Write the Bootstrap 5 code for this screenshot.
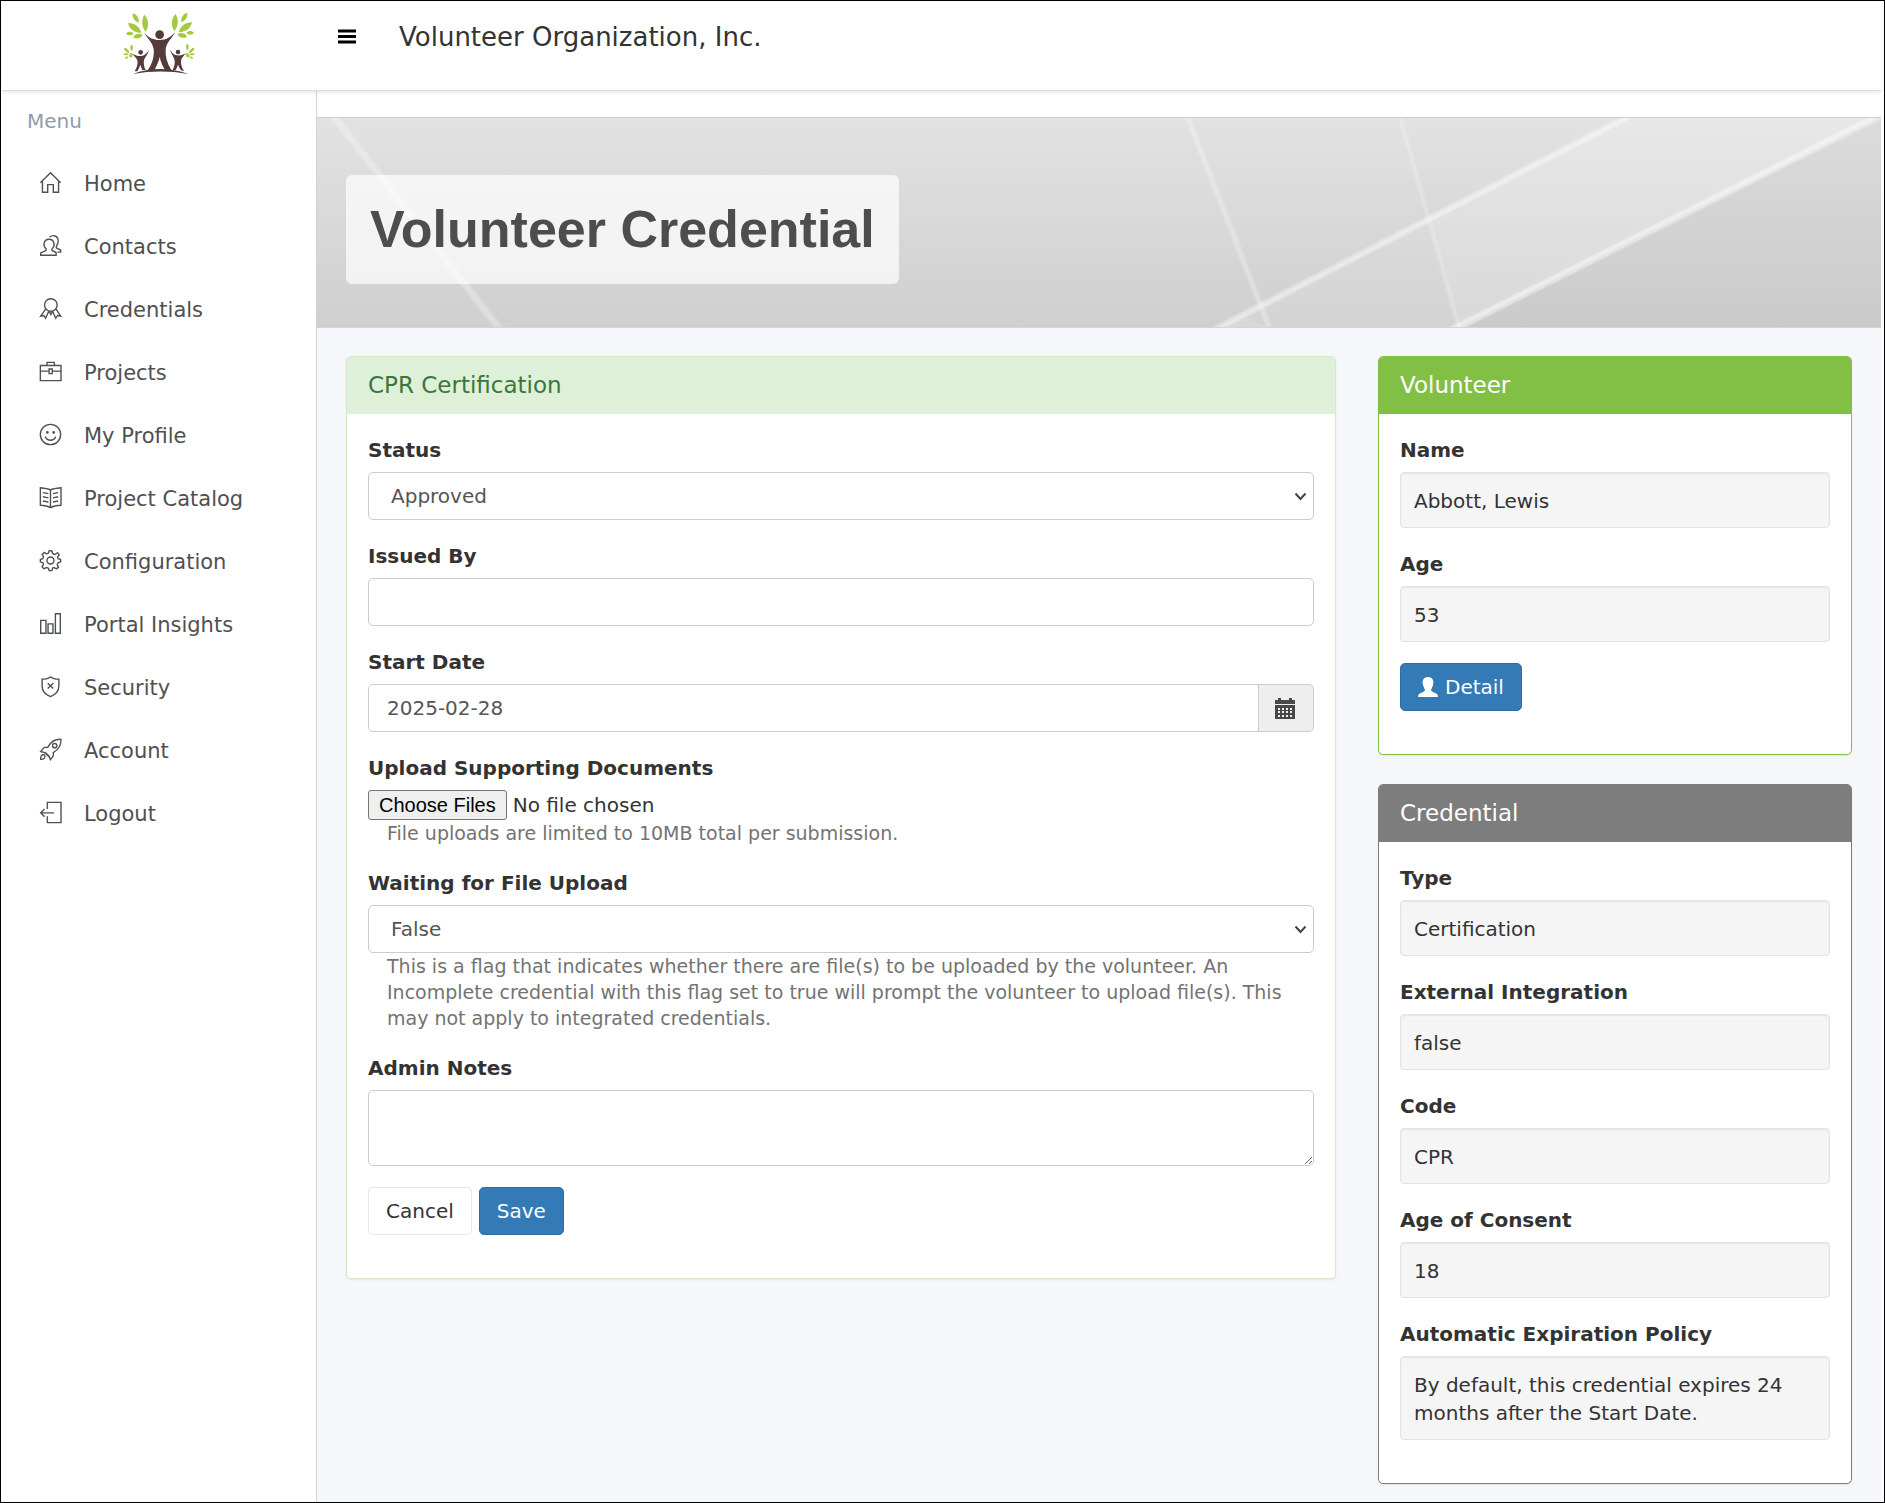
<!DOCTYPE html>
<html lang="en">
<head>
<meta charset="utf-8">
<meta name="viewport" content="width=device-width, initial-scale=1">
<title>Volunteer Credential</title>
<link href="https://cdn.jsdelivr.net/npm/bootstrap@5.3.0/dist/css/bootstrap.min.css" rel="stylesheet">
<style>
  body { font-family: "DejaVu Sans", Verdana, sans-serif; font-size: 20px; line-height: 28px; color: #333; background: #fff; }
  .app-frame { min-height: 100vh; border: 1px solid #000; padding: 0 3px 0 1px; background: #fff; }
  .app-header { min-height: 90px; border-bottom: 1px solid #dedede; box-shadow: 0 2px 3px rgba(0,0,0,.08); z-index: 2; }
  .brand-area { flex: 0 0 314px; padding: 11px 2px 0 0; }
  .brand-area svg { width: 74px; height: 64px; }
  .menu-toggle { width: 61px; padding: 28px 0 0 22px; border: 0; background: none; line-height: 0; text-align: left; }
  .org-name { font-size: 26px; line-height: 34px; padding: 19px 20px 0 22px; }
  .side-menu { flex: 0 0 315px; border-right: 1px solid #d3d3d5; background: #fff; }
  .menu-title { line-height: 60px; padding-left: 25px; color: #8e9bab; }
  .side-menu .nav-link { display: flex; align-items: center; gap: 23px; min-height: 63px; padding: 2px 20px 0 38px; font-size: 21px; color: #505050; }
  .side-menu svg { width: 21px; height: 21px; margin-bottom: 3px; fill: none; stroke: #4d5256; stroke-width: 4; overflow: visible; }
  .main-area { background: #f5f7fb; }
  .top-strip { height: 27px; background: #fff; border-bottom: 1px solid #cdcdcd; }
  .hero { height: 210px; border-bottom: 1px solid #ced6de; padding: 57px 29px 0; background: linear-gradient(#e2e2e2, #cfcfcf); overflow: hidden; }
  .hero-art { inset: 0; }
  .hero h1 { position: relative; display: inline-block; margin: 0; padding: 25px 24px; border-radius: 6px; background: rgba(255,255,255,.7); color: #4d4d4d; font: bold 52px/59px "Liberation Sans", Arial, sans-serif; }
  .page-body { padding: 28px 29px 16px; }
  .page-body > .row { --bs-gutter-x: 42px; }
  .panel { border: 1px solid var(--edge); border-radius: 5px; background: #fff; box-shadow: 0 1px 2px rgba(0,0,0,.08); overflow: hidden; }
  .panel + .panel { margin-top: 29px; }
  .panel > h2 { margin: 0; padding: 14px 21px; font-size: 23px; line-height: 29px; color: #fff; background: var(--edge); }
  .panel-body { padding: 21px 21px 43px; }
  .panel-cert { --edge: #d6e9c6; }
  .panel-cert > h2 { background: #dff0d8; color: #3c763d; }
  .panel-person { --edge: #82c045; }
  .panel-cred { --edge: #7d7d7d; }
  .field + .field, .actions { margin-top: 21px; }
  .field > label, .field > dt { display: block; margin-bottom: 6px; line-height: 31px; font-weight: 700; }
  .panel .form-control { height: 48px; padding: 9px 18px; border: 1px solid #ccc; border-radius: 5px; color: #555; font-size: 20px; line-height: 28px; background-color: #fff; }
  .panel select.form-control { padding: 9px 30px 9px 22px; background: #fff url("data:image/svg+xml,%3Csvg xmlns='http://www.w3.org/2000/svg' width='13' height='9'%3E%3Cpath d='M1.500 1.500L6.500 7L11.500 1.500' fill='none' stroke='%23444' stroke-width='2'/%3E%3C/svg%3E") no-repeat right 6px center; }
  .panel textarea.form-control { height: 76px; }
  .panel .input-group .form-control { border-radius: 5px 0 0 5px; }
  .input-group .date-btn { width: 56px; padding: 0; border: 1px solid #ccc; border-left: 0; border-radius: 0 5px 5px 0; background: #eee; color: #444; }
  .input-group .date-btn svg { display: block; margin: auto; }
  .file-pick { display: block; height: 30px; width: 100%; line-height: 28px; }
  .file-pick::file-selector-button { height: 30px; margin: 0 6px 0 0; padding: 0 10px; border: 1px solid #767676; border-radius: 3px; background: #efefef; color: #000; font-family: "Liberation Sans", Arial, sans-serif; line-height: 26px; }
  .hint { margin: 0; padding: 0 19px 1px; font-size: 19px; line-height: 26px; color: #737373; }
  .value-well { margin: 0; padding: 14px 13px 12px; min-height: 56px; border: 1px solid #e3e3e3; border-radius: 4px; background: #f5f5f5; box-shadow: inset 0 1px 2px rgba(0,0,0,.07); }
  .panel .btn { height: 48px; padding: 9px 17px; border-radius: 5px; font-size: 20px; line-height: 28px; }
  .btn-row { display: flex; gap: 7px; }
  .panel .btn-plain { border-color: #e7e7e7; color: #333; background: #fff; }
  .panel .btn-main { border-color: #2e6da4; color: #fff; background: #337ab7; }
</style>
<script src="https://cdn.jsdelivr.net/npm/bootstrap@5.3.0/dist/js/bootstrap.bundle.min.js"></script>
</head>
<body>
<div class="app-frame d-flex flex-column">
  <header class="app-header d-flex align-items-start bg-white position-relative">
    <div class="brand-area text-center">
      <a href="#" class="d-inline-block" aria-label="Volunteer Organization home">
        <svg viewBox="0 0 222 192">
          <defs>
            <g id="canopy" fill="#a5c940">
              <path d="M21 33C39 32 57 44 61 63C42 62 25 53 21 33Z"/>
              <path d="M70 8C83 22 86 42 74 59C62 45 60 25 70 8Z"/>
              <path d="M35 4C48 8 55 18 53 32C41 28 34 18 35 4Z"/>
              <path d="M36 76C42 64 54 63 65 68C61 79 47 83 36 76Z"/>
              <path d="M15 65C22 57 31 58 38 65C32 71 22 72 15 65Z"/>
            </g>
          </defs>
          <use href="#canopy"/>
          <use href="#canopy" transform="matrix(-1 0 0 1 234 -2)"/>
          <g fill="#a5c940">
            <ellipse cx="17" cy="115" rx="4" ry="10" transform="rotate(-45 17 115)"/><ellipse cx="32" cy="107" rx="4" ry="9"/><ellipse cx="15" cy="127" rx="8" ry="3"/><ellipse cx="30" cy="130" rx="5" ry="7" transform="rotate(30 30 130)"/><ellipse cx="17" cy="137" rx="5" ry="3" transform="rotate(-30 17 137)"/>
            <ellipse cx="212" cy="115" rx="4" ry="10" transform="rotate(45 212 115)"/><ellipse cx="199" cy="105" rx="4" ry="9"/><ellipse cx="213" cy="127" rx="8" ry="3"/><ellipse cx="200" cy="130" rx="5" ry="7" transform="rotate(-30 200 130)"/><ellipse cx="211" cy="137" rx="5" ry="3" transform="rotate(30 211 137)"/>
          </g>
          <g fill="#553b39">
            <circle cx="116" cy="68" r="13"/>
            <path d="M69 63C86 78 96 84 116 84C136 84 146 77 163 61C149 82 137 93 134 111C132 132 138 153 151 174L132 175C125 162 119 149 116 135C113 149 107 162 100 175L80 175C95 154 100 132 98 111C94 92 84 84 69 63Z"/>
            <circle cx="59" cy="121" r="7"/>
            <path d="M34 125C46 132 53 132 60 132C70 131 77 125 84 114C80 129 72 136 69 144C67 154 69 165 74 174H64C61 167 59 162 58 158C56 164 53 171 49 178H41C49 165 51 153 49 144C45 137 40 132 34 125Z"/>
            <circle cx="171" cy="120" r="7"/>
            <path d="M146 111C153 124 160 130 171 130C180 131 186 128 195 124C187 133 181 139 180 146C179 157 183 168 189 177L180 175C176 169 173 164 171 158C169 164 166 170 164 174H155C161 162 163 152 160 142C157 132 150 124 146 111Z"/>
            <path d="M36 186C85 166 148 166 202 186C146 176 92 176 36 186Z"/>
          </g>
        </svg>
      </a>
    </div>
    <button type="button" class="menu-toggle" aria-label="Toggle menu"><svg width="18" height="15"><path d="M0 2H18M0 7.500H18M0 13H18" stroke="#000" stroke-width="3"/></svg></button>
    <div class="org-name">Volunteer Organization, Inc.</div>
  </header>

  <div class="d-flex flex-grow-1">
    <aside class="side-menu">
      <div class="menu-title">Menu</div>
      <nav class="nav flex-column" aria-label="Main">
        <a class="nav-link" href="#"><svg viewBox="0 0 60 60"><path d="M1 31L30 2L59 31M7 27V58H22V36H38V58H53V27"/></svg>Home</a>
        <a class="nav-link" href="#"><svg viewBox="0 0 60 60"><path d="M2 58V51L16 45Q19 43 17 39C7 29 11 12 26 12C41 12 44 29 35 39Q32 43 36 45L46 50V58ZM27 6C37-2 52 2 52 17C52 24 49 29 47 32Q45 36 49 38L59 43V49H50"/></svg>Contacts</a>
        <a class="nav-link" href="#"><svg viewBox="0 0 60 60"><circle cx="31" cy="20" r="18"/><path d="M16 32L2 52L11 50L16 58L25 38M46 32L59 52L50 50L45 58L36 38M26 38L31 47L36 38"/></svg>Credentials</a>
        <a class="nav-link" href="#"><svg viewBox="0 0 60 60"><path d="M1 13H60V56H1ZM1 29H25M36 29H60M20 13V4H41V13M26 23H35V36H26Z"/></svg>Projects</a>
        <a class="nav-link" href="#"><svg viewBox="0 0 60 60"><circle cx="30" cy="30" r="29"/><circle cx="21" cy="24" r="2" fill="#4d5256"/><circle cx="39" cy="24" r="2" fill="#4d5256"/><path d="M15 36C21 50 39 50 45 36"/></svg>My Profile</a>
        <a class="nav-link" href="#"><svg viewBox="0 0 60 60"><path d="M30 8Q22 4 1 2V52Q20 53 30 59Q40 53 60 52V2Q38 4 30 8V59M8 16L24 19M8 28L24 31M8 40L24 43M52 16L37 19M52 28L37 31M52 40L37 43"/></svg>Project Catalog</a>
        <a class="nav-link" href="#"><svg viewBox="0 0 60 60"><circle cx="30" cy="30" r="10"/><path d="M26 2H34L36 10L43 13L50 8L55 14L50 20L52 25L59 27V34L52 36L49 42L53 49L47 54L40 50L36 52L34 59H26L24 52L18 50L11 54L6 48L10 41L8 36L1 34V27L8 25L10 19L6 12L12 7L19 11L24 9Z" stroke-linejoin="round"/></svg>Configuration</a>
        <a class="nav-link" href="#"><svg viewBox="0 0 60 60"><path d="M2 21H17V58H2ZM23 31H37V58H23ZM44 2H58V58H44Z"/></svg>Portal Insights</a>
        <a class="nav-link" href="#"><svg viewBox="0 0 60 60"><path d="M30 2Q22 9 6 9V28C6 45 17 54 30 59C43 54 54 45 54 28V9Q38 9 30 2M22 21L38 36M38 21L22 36"/></svg>Security</a>
        <a class="nav-link" href="#"><svg viewBox="0 0 60 60"><path d="M60 1C42 0 31 7 22 24H12L2 36L14 39L27 52L30 59L38 48V39C54 29 61 19 60 1ZM16 39L27 50M2 58C1 48 5 44 12 45C18 51 13 59 2 58Z"/><circle cx="42" cy="19" r="6"/></svg>Account</a>
        <a class="nav-link" href="#"><svg viewBox="0 0 60 60"><path d="M21 20V1H60V59H21V41M40 31H2M13 20L2 31L13 42"/></svg>Logout</a>
      </nav>
    </aside>

    <main class="main-area flex-grow-1">
      <div class="top-strip"></div>
      <div class="hero position-relative">
        <svg class="hero-art position-absolute w-100 h-100" viewBox="0 0 1564 209" preserveAspectRatio="none" aria-hidden="true">
          <defs><filter id="soft"><feGaussianBlur stdDeviation="1"/></filter></defs>
          <path d="M1308 0H1558L1141 209H903Z" fill="#fff" opacity=".2"/>
          <path d="M1558 0H1564V209H1141Z" fill="#000" opacity=".025"/>
          <path d="M952 209L925 198L1112 102L1142 209Z" fill="#000" opacity=".02"/>
          <g stroke="#fff" fill="none" filter="url(#soft)">
            <path d="M14-5L185 214" stroke-width="7" opacity=".3"/>
            <path d="M869-5L954 214" stroke-width="5" opacity=".3"/>
            <path d="M1082-5L1143 214" stroke-width="4" opacity=".25"/>
            <path d="M1318-5L893 214" stroke-width="6" opacity=".45"/>
            <path d="M1568-5L1131 214" stroke-width="7" opacity=".5"/>
          </g>
        </svg>
        <h1>Volunteer Credential</h1>
      </div>

      <div class="page-body">
        <div class="row">
          <div class="col-8">
            <section class="panel panel-cert">
              <h2>CPR Certification</h2>
              <form class="panel-body" onsubmit="return false">
                <div class="field"><label for="status">Status</label>
                  <select id="status" class="form-control"><option>Approved</option><option>Incomplete</option></select></div>
                <div class="field"><label for="issuer">Issued By</label>
                  <input id="issuer" type="text" class="form-control"></div>
                <div class="field"><label for="start">Start Date</label>
                  <div class="input-group"><input id="start" type="text" class="form-control" value="2025-02-28">
                    <button type="button" class="date-btn" aria-label="Pick a date"><svg width="20" height="21" viewBox="0 0 20 21"><path fill="#484848" d="M0 2H3V0H6V2H14V0H17V2H20V6H0ZM0 7H20V21H0Z"/><path stroke="#eee" stroke-width="2" stroke-dasharray="2 2" d="M3 11H18M3 14H18M3 18H18"/></svg></button></div></div>
                <div class="field"><label for="docs">Upload Supporting Documents</label>
                  <input id="docs" type="file" multiple class="file-pick">
                  <p class="hint">File uploads are limited to 10MB total per submission.</p></div>
                <div class="field"><label for="waiting">Waiting for File Upload</label>
                  <select id="waiting" class="form-control"><option>False</option><option>True</option></select>
                  <p class="hint">This is a flag that indicates whether there are file(s) to be uploaded by the volunteer. An Incomplete credential with this flag set to true will prompt the volunteer to upload file(s). This may not apply to integrated credentials.</p></div>
                <div class="field"><label for="notes">Admin Notes</label>
                  <textarea id="notes" class="form-control"></textarea></div>
                <div class="actions btn-row"><button type="button" class="btn btn-plain">Cancel</button><button type="submit" class="btn btn-main">Save</button></div>
              </form>
            </section>
          </div>

          <div class="col-4">
            <section class="panel panel-person">
              <h2>Volunteer</h2>
              <div class="panel-body">
                <dl class="m-0">
                  <div class="field"><dt>Name</dt><dd class="value-well">Abbott, Lewis</dd></div>
                  <div class="field"><dt>Age</dt><dd class="value-well">53</dd></div>
                </dl>
                <div class="actions btn-row"><a href="#" class="btn btn-main btn-row align-items-center"><svg width="20" height="20" viewBox="0 0 20 20" fill="#fff"><path d="M10 0C5 0 4 4 5 8Q6 11 7 13Q7 14 5 15L1 17Q0 18 0 20H20Q20 18 19 17L15 15Q13 14 13 13Q14 11 15 8C16 4 15 0 10 0Z"/></svg>Detail</a></div>
              </div>
            </section>
            <section class="panel panel-cred">
              <h2>Credential</h2>
              <dl class="panel-body m-0">
                <div class="field"><dt>Type</dt><dd class="value-well">Certification</dd></div>
                <div class="field"><dt>External Integration</dt><dd class="value-well">false</dd></div>
                <div class="field"><dt>Code</dt><dd class="value-well">CPR</dd></div>
                <div class="field"><dt>Age of Consent</dt><dd class="value-well">18</dd></div>
                <div class="field"><dt>Automatic Expiration Policy</dt><dd class="value-well">By default, this credential expires 24 months after the Start Date.</dd></div>
              </dl>
            </section>
          </div>
        </div>
      </div>
    </main>
  </div>
</div>
</body>
</html>
